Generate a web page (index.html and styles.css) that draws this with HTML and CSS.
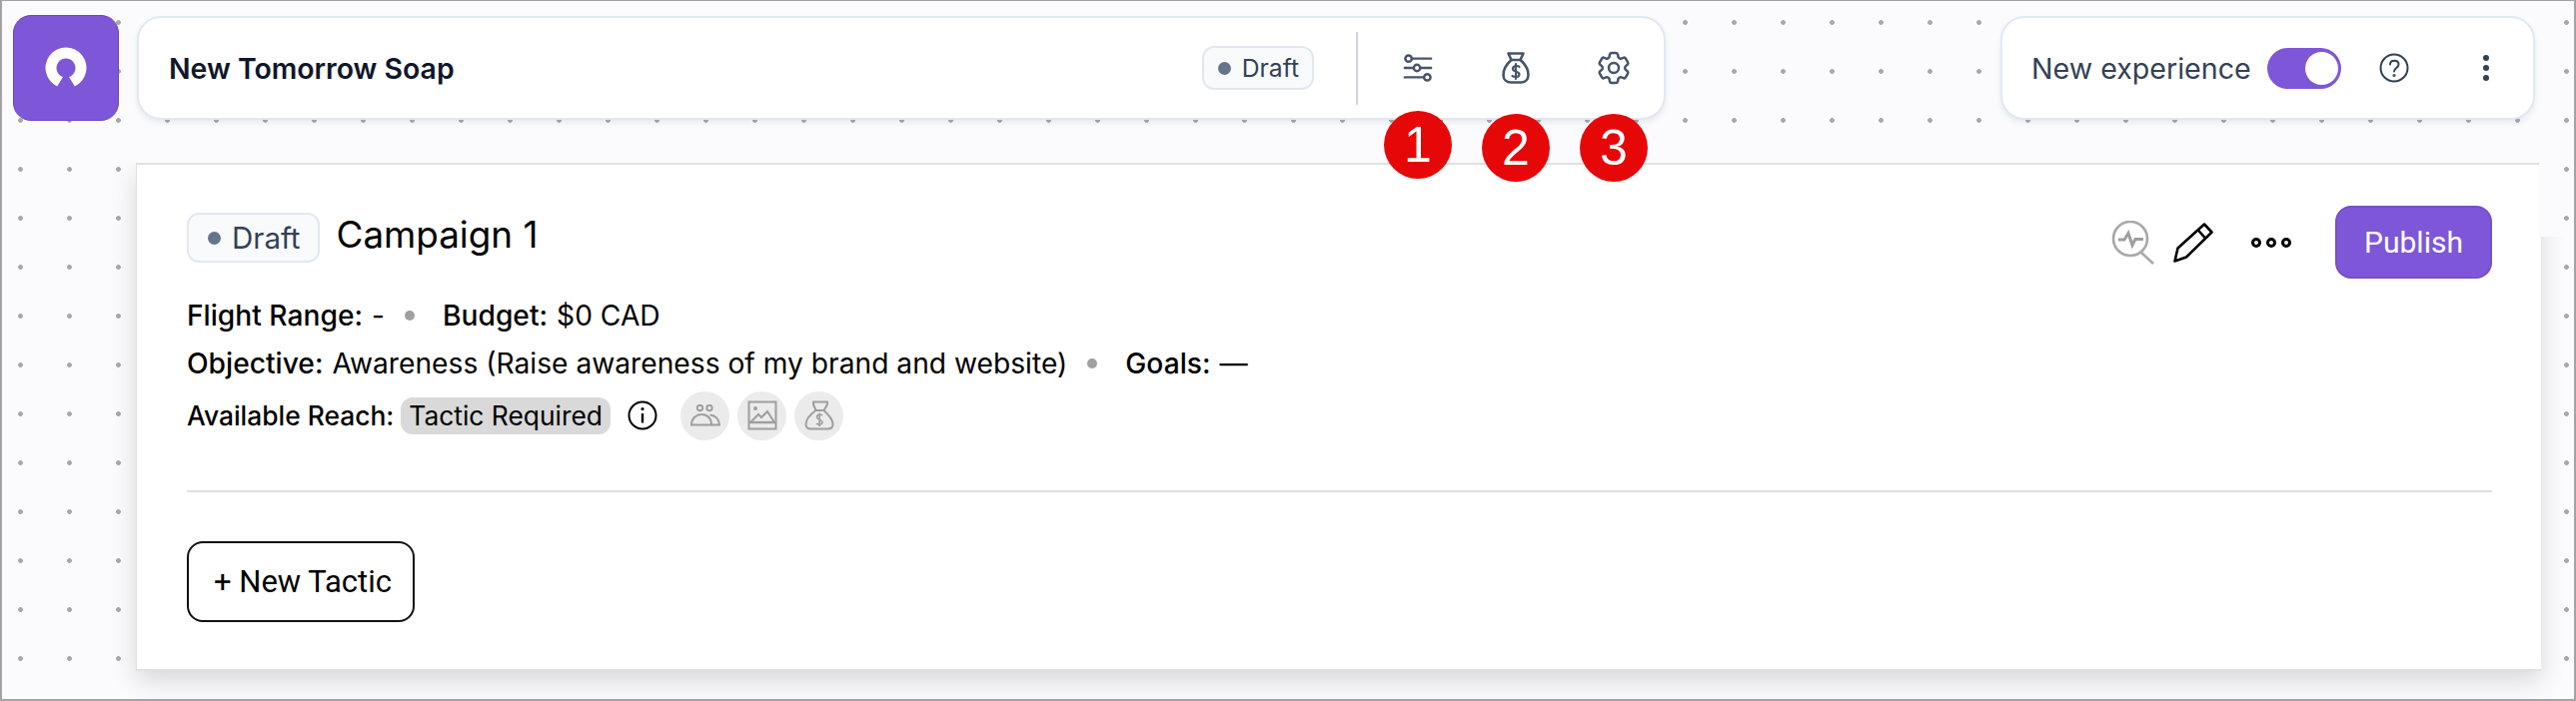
FILE: index.html
```html
<!DOCTYPE html>
<html>
<head>
    <title>New Tomorrow Soap</title>
    <link rel="stylesheet" href="styles.css">
</head>
<body>
    <div id="topbar">
        <div class="logo">
            <svg width="44" height="44" viewBox="0 0 44 44">
                <path fill="#fff" d="M13.200 40.500 A20.500 20.500 0 1 1 30.800 40.500 L25 31 A9.500 9.500 0 1 0 19 31 Z"/>
            </svg>
        </div>

        <div class="bar-card campaign-bar">
            <span class="bar-title">New Tomorrow Soap</span>
            <span class="status-badge small-badge"><i class="status-dot"></i>Draft</span>
            <span class="bar-divider"></span>
            <div class="bar-icons">
                <span class="bar-icon">
                    <svg width="30" height="30" viewBox="0 0 32 32" fill="none" stroke="#475569" stroke-width="2.600" stroke-linecap="round">
                        <circle cx="6" cy="6" r="3.400"/><path d="M10 6H30"/>
                        <circle cx="15" cy="16" r="3.400"/><path d="M2 16H11M19 16H30"/>
                        <circle cx="26" cy="26" r="3.400"/><path d="M2 26H22"/>
                    </svg>
                    <b class="step-mark">1</b>
                </span>
                <span class="bar-icon">
                    <svg width="28" height="32" viewBox="0 0 28 32" fill="none" stroke="#475569" stroke-width="2.600" stroke-linecap="round" stroke-linejoin="round">
                        <path d="M9.500 8 L6.500 1.500 H21.500 L18.500 8 Z"/>
                        <path d="M9.500 8 C5 12 1.500 18 1.500 23 C1.500 28 5 30.500 9 30.500 H19 C23 30.500 26.500 28 26.500 23 C26.500 18 23 12 18.500 8"/>
                        <path d="M17.500 15 C16.500 13.500 11 13.500 11 17 C11 20.500 17.500 19 17.500 22.500 C17.500 25.500 12 25.500 10.500 24 M14 12 V27" stroke-width="2.200"/>
                    </svg>
                    <b class="step-mark">2</b>
                </span>
                <span class="bar-icon">
                    <svg width="40" height="40" viewBox="0 0 24 24" fill="none" stroke="#475569" stroke-width="1.500" stroke-linejoin="round">
                        <path d="M9.594 3.940c.09-.542.56-.94 1.110-.94h2.593c.55 0 1.020.398 1.110.94l.213 1.281c.063.374.313.686.645.870.074.040.147.083.22.127.324.196.72.257 1.075.124l1.217-.456a1.125 1.125 0 011.370.490l1.296 2.247a1.125 1.125 0 01-.26 1.431l-1.003.827c-.293.240-.438.613-.431.992a6.759 6.759 0 010 .255c-.007.378.138.75.43.99l1.005.828c.424.35.534.954.26 1.430l-1.298 2.247a1.125 1.125 0 01-1.369.491l-1.217-.456c-.355-.133-.75-.072-1.076.124a6.570 6.570 0 01-.22.128c-.331.183-.581.495-.644.869l-.213 1.280c-.09.543-.56.941-1.110.941h-2.594c-.55 0-1.020-.398-1.110-.94l-.213-1.281c-.062-.374-.312-.686-.644-.870a6.520 6.520 0 01-.22-.127c-.325-.196-.72-.257-1.076-.124l-1.217.456a1.125 1.125 0 01-1.369-.49l-1.297-2.247a1.125 1.125 0 01.26-1.431l1.004-.827c.292-.24.437-.613.43-.992a6.932 6.932 0 010-.255c.007-.378-.138-.75-.43-.99l-1.004-.828a1.125 1.125 0 01-.26-1.430l1.297-2.247a1.125 1.125 0 011.370-.491l1.216.456c.356.133.751.072 1.076-.124.072-.044.146-.087.22-.128.332-.183.582-.495.644-.869l.214-1.281z"/>
                        <circle cx="12" cy="12" r="3"/>
                    </svg>
                    <b class="step-mark">3</b>
                </span>
            </div>
        </div>

        <div class="bar-card experience-bar">
            <span class="experience-label">New experience</span>
            <span class="toggle"><i class="toggle-knob"></i></span>
            <svg class="help-icon" width="30" height="30" viewBox="0 0 30 30" fill="none" stroke="#334155" stroke-width="2" stroke-linecap="round">
                <circle cx="15" cy="15" r="13.500"/>
                <path d="M11 11.500 C11 6.500 19.500 6.500 19.500 11.500 C19.500 15 15 15 15 18.500"/>
                <circle cx="15" cy="22.500" r="0.600"/>
            </svg>
            <span class="kebab"><i></i><i></i><i></i></span>
        </div>
    </div>

    <div id="campaign">
        <div class="campaign-head">
            <span class="status-badge"><i class="status-dot"></i>Draft</span>
            <h1>Campaign 1</h1>
            <div class="campaign-actions">
                <svg width="44" height="44" viewBox="0 0 44 44" fill="none" stroke="#a8a8a8" stroke-width="2.600">
                    <circle cx="19" cy="18" r="17"/>
                    <path d="M30 32 L42 43"/>
                    <path d="M7 19 H13 L17 12.500 L21 24.500 L24 18.500 H32" stroke="#9e9e9e" stroke-width="3"/>
                </svg>
                <svg class="pencil" width="40" height="40" viewBox="0 0 40 40" fill="none" stroke="#000" stroke-width="2.600" stroke-linejoin="round">
                    <path d="M1.500 38.500 L4.500 25.500 L31 1.500 L38.500 9.500 L13 34.500 Z"/>
                    <path d="M24.500 7 L32 15.500"/>
                </svg>
                <span class="more-dots"><i></i><i></i><i></i></span>
                <button class="publish">Publish</button>
            </div>
        </div>

        <div class="meta-row first-row"><b>Flight Range:</b>-<i class="meta-dot"></i><b>Budget:</b>$0 CAD</div>
        <div class="meta-row"><b>Objective:</b>Awareness (Raise awareness of my brand and website)<i class="meta-dot"></i><b>Goals:</b>—</div>
        <div class="meta-row reach-row">
            <b>Available Reach:</b>
            <span class="reach-chip">Tactic Required</span>
            <svg class="info-icon" width="30" height="30" viewBox="0 0 30 30" fill="none" stroke="#000" stroke-width="2">
                <circle cx="15" cy="15" r="13.500"/>
                <path d="M15 13 V22.500" stroke-width="2.400"/>
                <circle cx="15" cy="8.500" r="1" stroke-width="1.200" fill="#000"/>
            </svg>
            <span class="reach-icon">
                <svg width="30" height="22" viewBox="0 0 30 22" fill="none" stroke="#9e9e9e" stroke-width="2">
                    <circle cx="9.500" cy="3.500" r="2.700"/><circle cx="19" cy="3.500" r="2.700"/>
                    <path d="M1 20.500 C1 14 6 10 11 10 C17 10 21 14 21 20.500 Z"/>
                    <path d="M19.500 10.500 C25 11 29 15 29 20.500 H21"/>
                </svg>
            </span>
            <span class="reach-icon">
                <svg width="30" height="30" viewBox="0 0 30 30" fill="none" stroke="#9e9e9e" stroke-width="2">
                    <path d="M1.500 1.500 H28.500 V28.500 H1.500 Z"/>
                    <path d="M1.500 22 H28.500" stroke-width="2.400"/>
                    <path d="M3 22 L11 14 L14 17 L20 11 L27 22"/>
                    <circle cx="8" cy="8" r="1" fill="#9e9e9e"/>
                </svg>
            </span>
            <span class="reach-icon">
                <svg width="30" height="30" viewBox="0 0 30 30" fill="none" stroke="#9e9e9e" stroke-width="2" stroke-linejoin="round">
                    <path d="M9 1.500 H23 V4 L19.500 10 H11.500 L9 4 Z"/>
                    <path d="M11.500 10 C6 14 1.500 19 1.500 24 C1.500 27 4 28.500 7 28.500 H23 C26 28.500 28.500 27 28.500 24 C28.500 19 24 14 19.500 10"/>
                    <path d="M18 15 C17 13.800 12.500 14 12.500 16.800 C12.500 19.800 18 18.800 18 21.800 C18 24.500 13.500 24.500 12 23.200 M15.200 12.500 V26" stroke-width="1.600"/>
                </svg>
            </span>
        </div>

        <hr class="section-line">

        <button class="new-tactic">+ New Tactic</button>
    </div>
</body>
</html>
```

FILE: styles.css
```css
* {
    box-sizing: border-box;
}

html, body {
    height: 100%;
}

body {
    margin: 0;
    padding: 13px 37px 0 11px;
    border: 2px solid #a3a3a3;
    border-top-width: 1px;
    font-family: Inter, "Noto Sans", sans-serif;
    color: #000;
    background-color: #fbfbfe;
    background-image: radial-gradient(circle at 2.500px 2.500px, #a8a8ac 2px, transparent 2.800px);
    background-size: 49px 49px;
    background-position: 18px 20px;
    overflow: hidden;
}

#topbar {
    position: relative;
    z-index: 1;
    display: flex;
    align-items: center;
    width: 2524px;
    height: 108px;
}

.logo {
    flex: none;
    width: 106px;
    height: 106px;
    margin-right: 18px;
    display: flex;
    align-items: center;
    justify-content: center;
    background-color: #7e57d9;
    border: 1px solid #6a45c0;
    border-radius: 18px;
}

.bar-card {
    display: flex;
    align-items: center;
    height: 104px;
    background-color: #fff;
    border: 2px solid #e2e8f0;
    border-radius: 24px;
    box-shadow: 0 3px 5px rgba(100, 116, 139, 0.12);
}

.campaign-bar {
    width: 1530px;
    padding: 0 34px 0 30px;
}

.bar-title {
    font-size: 28.400px;
    font-weight: 600;
    color: #0f172a;
    margin-right: auto;
}

.status-badge {
    display: inline-flex;
    align-items: center;
    height: 50px;
    padding: 0 17px 0 19px;
    font-size: 29.500px;
    color: #334155;
    background-color: #f8fafc;
    border: 2px solid #e2e8f0;
    border-radius: 12px;
}

.small-badge {
    height: 44px;
    padding: 0 13px 0 14px;
    font-size: 24.700px;
}

.status-dot {
    width: 13px;
    height: 13px;
    margin-right: 11px;
    border-radius: 50%;
    background-color: #64748b;
}

.bar-divider {
    width: 2px;
    height: 73px;
    margin-left: 42px;
    background-color: #cbd5e1;
}

.bar-icons {
    display: flex;
    margin-left: 44px;
    gap: 66px;
}

.bar-icon {
    position: relative;
    display: flex;
    align-items: center;
    justify-content: center;
    width: 32px;
    height: 34px;
}

.bar-icon svg {
    flex: none;
}

.step-mark {
    position: absolute;
    left: 50%;
    top: 60px;
    width: 68px;
    height: 68px;
    margin-left: -34px;
    display: flex;
    align-items: center;
    justify-content: center;
    font-family: "Liberation Sans", sans-serif;
    font-size: 50px;
    font-weight: 400;
    color: #fff;
    background-color: #e60808;
    border-radius: 50%;
}

.bar-icon + .bar-icon .step-mark {
    top: 63px;
}

.experience-bar {
    width: 535px;
    margin-left: auto;
    padding-left: 29px;
}

.experience-label {
    font-size: 28.600px;
    color: #334155;
}

.toggle {
    width: 74px;
    height: 41px;
    margin-left: 16px;
    padding: 4px 3px;
    display: flex;
    justify-content: flex-end;
    background-color: #7e57d9;
    border-radius: 21px;
}

.toggle-knob {
    width: 33px;
    height: 33px;
    border-radius: 50%;
    background-color: #fff;
}

.help-icon {
    margin-left: 38px;
}

.kebab {
    display: flex;
    flex-direction: column;
    gap: 4px;
    margin-left: 74px;
}

.kebab i {
    width: 6px;
    height: 6px;
    border-radius: 50%;
    background-color: #334155;
}

#campaign {
    width: 2407px;
    height: 509px;
    margin-top: 41px;
    margin-left: 123px;
    padding: 41px 49px 0 50px;
    background-color: #fff;
    border-top: 2px solid #e0e0e0;
    border-left: 1px solid #e0e0e0;
    border-bottom: 2px solid #e0e0e0;
    box-shadow: 0 10px 24px rgba(0, 0, 0, 0.14);
    /* the shadow only shows on the right below the top part of the card */
    clip-path: polygon(-60px 0, calc(100% - 2px) 0, calc(100% - 2px) 74px, calc(100% + 60px) 74px, calc(100% + 60px) calc(100% + 60px), -60px calc(100% + 60px));
}

.campaign-head {
    display: flex;
    align-items: flex-start;
    height: 73px;
}

.campaign-head .status-badge {
    margin-top: 7px;
}

h1 {
    margin: 7px 0 0 17px;
    font-size: 36.800px;
    line-height: 44px;
    font-weight: 400;
}

.campaign-actions {
    display: flex;
    align-items: center;
    margin-left: auto;
}

.pencil {
    margin-left: 18px;
}

.more-dots {
    display: flex;
    gap: 5px;
    margin-left: 38px;
}

.more-dots i {
    width: 10px;
    height: 10px;
    border: 3px solid #000;
    border-radius: 50%;
}

.publish {
    width: 157px;
    height: 73px;
    margin-left: 44px;
    font-family: Roboto, sans-serif;
    font-size: 30px;
    font-weight: 400;
    color: #fff;
    background-color: #7e57d9;
    border: 2px solid #7450c8;
    border-radius: 16px;
}

.meta-row {
    display: flex;
    align-items: center;
    height: 48px;
    font-size: 28.200px;
    white-space: pre;
}

.meta-row b {
    font-weight: 500;
    margin-right: 9px;
}

.first-row {
    margin-top: 13px;
}

.meta-dot {
    width: 10px;
    height: 10px;
    margin: 0 28px 0 20px;
    border-radius: 50%;
    background-color: #a0a0a0;
}

.reach-row {
    height: 50px;
    margin-top: 3px;
    font-size: 26.400px;
}

.reach-row b {
    margin-right: 7px;
}

.reach-chip {
    display: flex;
    align-items: center;
    height: 37px;
    padding: 0 8px;
    background-color: #d9d9d9;
    border-radius: 12px;
}

.info-icon {
    margin: 0 23px 0 17px;
}

.reach-icon {
    display: flex;
    align-items: center;
    justify-content: center;
    width: 49px;
    height: 49px;
    margin-right: 8px;
    background-color: #ebebeb;
    border-radius: 50%;
}

.section-line {
    height: 2px;
    margin: 50px 0 0;
    border: 0;
    background-color: #e0e0e0;
}

.new-tactic {
    display: block;
    width: 228px;
    height: 81px;
    margin-top: 49px;
    padding-left: 10px;
    font-family: Roboto, sans-serif;
    font-size: 31px;
    font-weight: 400;
    color: #000;
    background-color: #fff;
    border: 2px solid #111;
    border-radius: 16px;
}
```
